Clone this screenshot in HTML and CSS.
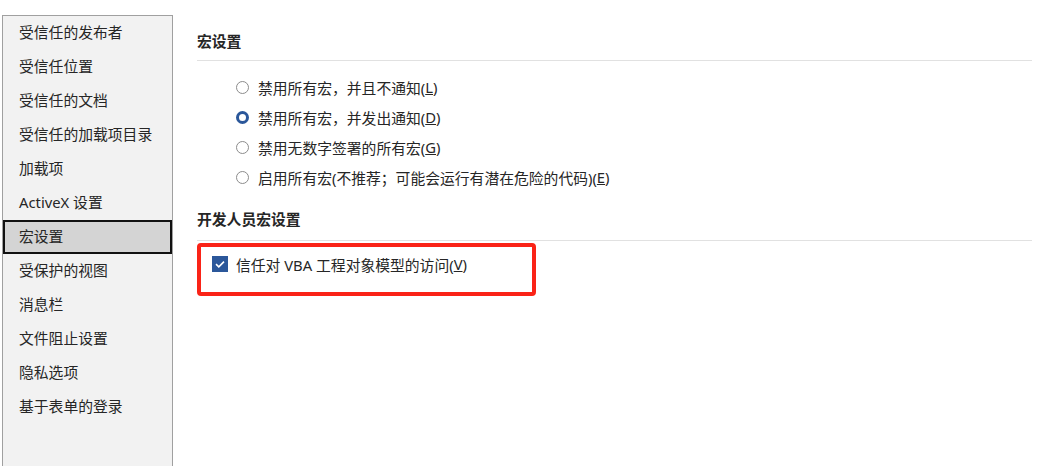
FILE: index.html
```html
<!DOCTYPE html>
<html>
<head>
    <meta charset="utf-8">
    <title>信任中心</title>
    <link rel="stylesheet" href="styles.css">
</head>
<body>

<div class="page">
    <div class="sidebar">
        <div class="nav-item">受信任的发布者</div>
        <div class="nav-item">受信任位置</div>
        <div class="nav-item">受信任的文档</div>
        <div class="nav-item">受信任的加载项目录</div>
        <div class="nav-item">加载项</div>
        <div class="nav-item">ActiveX 设置</div>
        <div class="nav-item selected">宏设置</div>
        <div class="nav-item">受保护的视图</div>
        <div class="nav-item">消息栏</div>
        <div class="nav-item">文件阻止设置</div>
        <div class="nav-item">隐私选项</div>
        <div class="nav-item">基于表单的登录</div>
    </div>

    <div class="main">
        <div class="section-title">宏设置</div>
        <div class="options">
            <div class="option"><span class="radio"></span>禁用所有宏，并且不通知(<u>L</u>)</div>
            <div class="option"><span class="radio checked"></span>禁用所有宏，并发出通知(<u>D</u>)</div>
            <div class="option"><span class="radio"></span>禁用无数字签署的所有宏(<u>G</u>)</div>
            <div class="option"><span class="radio"></span>启用所有宏(不推荐；可能会运行有潜在危险的代码)(<u>E</u>)</div>
        </div>

        <div class="section-title second">开发人员宏设置</div>
        <div class="highlight">
            <div class="check-row">
                <span class="checkbox">
                    <svg width="16" height="16" viewBox="0 0 16 16">
                        <polyline points="4,8.2 6.8,10.8 12,5.6" fill="none" stroke="#fff" stroke-width="1.6"/>
                    </svg>
                </span>
                信任对 VBA 工程对象模型的访问(<u>V</u>)
            </div>
        </div>
    </div>
</div>

</body>
</html>
```

FILE: styles.css
```css
body {
    margin: 0;
    background-color: #fff;
    font-family: "Noto Sans", "Noto Sans CJK SC", sans-serif;
    font-size: 14.8px;
    color: #262626;
    overflow: hidden;
}

.page {
    display: flex;
    height: 466px;
    overflow: hidden;
}

.sidebar {
    width: 169px;
    margin: 15px 0 0 2px;
    border: 1px solid #a0a0a0;
    border-bottom: none;
    background-color: #f2f2f2;
}

.nav-item {
    height: 30px;
    line-height: 29px;
    padding-left: 14px;
    border: 2px solid transparent;
    white-space: nowrap;
}

.nav-item.selected {
    background-color: #d4d4d4;
    border-color: #111;
}

.main {
    width: 835px;
    margin-left: 24px;
    padding-top: 31px;
}

.section-title {
    font-weight: bold;
    line-height: 20px;
    padding-bottom: 9px;
    border-bottom: 1px solid #e1e1e1;
}

.section-title.second {
    margin-top: 17px;
    padding-bottom: 11px;
}

.options {
    margin-top: 11px;
}

.option {
    display: flex;
    align-items: center;
    height: 30px;
    padding-left: 39px;
}

.radio {
    box-sizing: border-box;
    width: 13px;
    height: 13px;
    border: 1px solid #8c8c8c;
    border-radius: 50%;
    background-color: #fff;
    margin-right: 9px;
}

.radio.checked {
    border: 3.5px solid #2b579a;
}

.highlight {
    box-sizing: border-box;
    width: 339px;
    height: 53px;
    margin-top: 2px;
    border: 4px solid #fa2317;
    border-radius: 4px;
    padding: 9px 0 0 11px;
}

.check-row {
    display: flex;
    align-items: center;
    height: 16px;
}

.checkbox {
    width: 16px;
    height: 16px;
    background-color: #2b579a;
    margin-right: 8px;
    display: flex;
}
```
